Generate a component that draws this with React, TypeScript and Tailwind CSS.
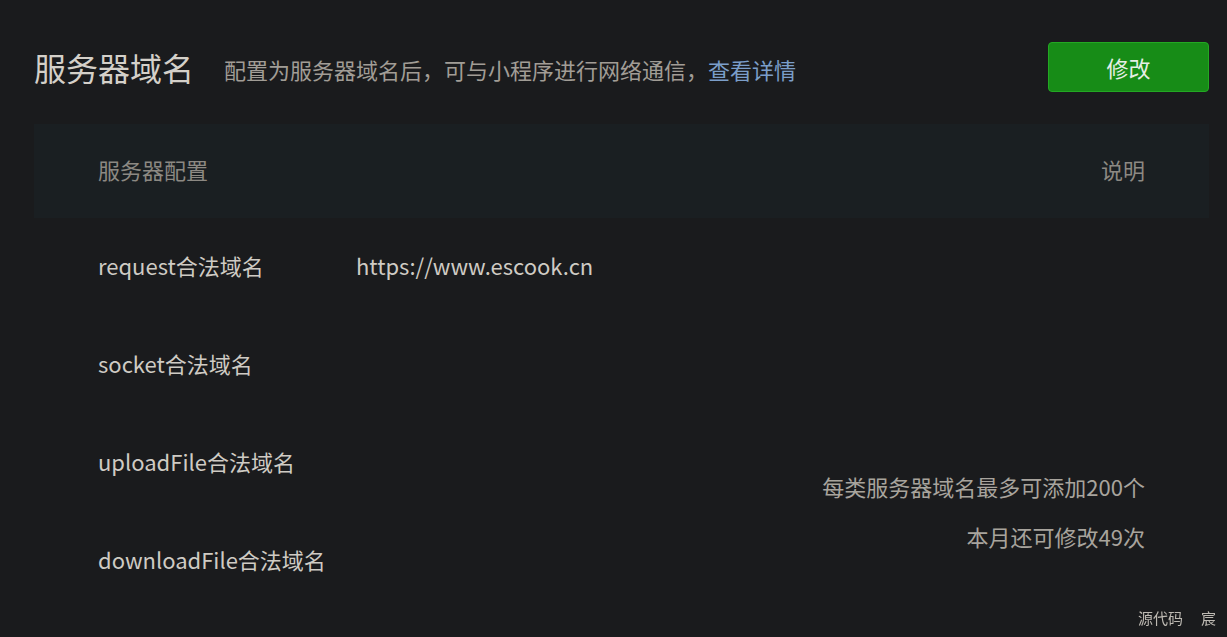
import React from 'react';

type DomainRow = {
  label: string;
  value?: string;
};

const rows: DomainRow[] = [
  { label: 'request合法域名', value: 'https://www.escook.cn' },
  { label: 'socket合法域名' },
  { label: 'uploadFile合法域名' },
  { label: 'downloadFile合法域名' },
];

const font = { fontFamily: '"Noto Sans CJK SC", "Noto Sans", sans-serif' };

export default function App() {
  return (
    <div
      className="relative h-screen overflow-hidden bg-[#1a1b1d] pt-[42px] pl-[34px] pr-[18px]"
      style={font}
    >
      {/* title bar */}
      <div className="flex items-center h-[50px]">
        <h1 className="text-[32px] leading-none text-[#d4d0c9] font-normal">服务器域名</h1>
        <p className="ml-[30px] mt-[4px] text-[22px] leading-none text-[#a19d96]">
          配置为服务器域名后，可与小程序进行网络通信，
          <a className="text-[#7b9ec9]">查看详情</a>
        </p>
        <button className="ml-auto w-[161px] h-[50px] rounded-[4px] bg-[#178c17] border border-[#23a823] text-[22px] text-[#e6efe6]">
          修改
        </button>
      </div>

      {/* table */}
      <div className="mt-[32px]">
        <div className="flex items-center justify-between h-[94px] pb-[4px] bg-[#1a1f22] px-[64px] text-[22px] text-[#8c8983]">
          <span>服务器配置</span>
          <span>说明</span>
        </div>

        <div className="flex">
          <div className="flex-1 pl-[64px]">
            {rows.map((row) => (
              <div key={row.label} className="flex items-center h-[98px] pb-[4px] text-[22px] text-[#cfcbc4]">
                <span className="w-[258px] shrink-0">{row.label}</span>
                {row.value && <span>{row.value}</span>}
              </div>
            ))}
          </div>
          <div className="pt-[243px] pr-[64px] flex flex-col items-end text-[22px] leading-[50px] text-[#a8a49d]">
            <span>每类服务器域名最多可添加200个</span>
            <span>本月还可修改49次</span>
          </div>
        </div>
      </div>

      {/* footer links */}
      <div className="fixed right-[11px] bottom-[9px] flex gap-[18px] text-[15px] leading-[20px] text-[#bdb9b2]">
        <span>源代码</span>
        <span>宸</span>
      </div>
    </div>
  );
}
